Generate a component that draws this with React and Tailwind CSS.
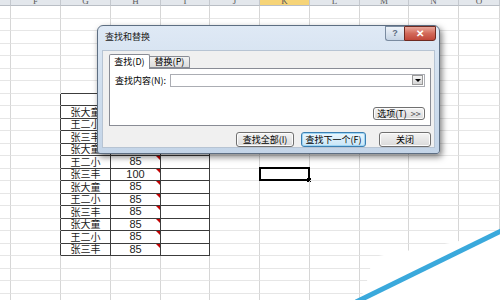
import React from "react";

const COLS = ["", "F", "G", "H", "I", "J", "K", "L", "M", "N", "O"];
const NAMES = ["张大童", "王二小", "张三丰", "张大童", "王二小", "张三丰", "张大童", "王二小", "张三丰", "张大童", "王二小", "张三丰"];
const SCORES = ["85", "85", "85", "85", "85", "100", "85", "85", "85", "85", "85", "85"];
const ROWS = 24;

function Cell({ r, c }) {
  const inTable = r >= 7 && r <= 19 && c >= 2 && c <= 4;
  const rightDark = inTable || (c === 1 && r >= 7 && r <= 19);
  const bottomDark = inTable || (r === 6 && c >= 2 && c <= 4);
  const rb = rightDark ? "border-r-[#3c3c3c]" : "border-r-[#d6d6d6]";
  const bb = bottomDark ? "border-b-[#3c3c3c]" : "border-b-[#e6e6e6]";
  let content = null;
  if (c === 2 && r >= 8 && r <= 19) {
    content = (
      <span className="text-[10px] leading-none text-[#1a1a1a] [font-family:'Noto_Sans_CJK_SC',sans-serif]">
        {NAMES[r - 8]}
      </span>
    );
  }
  if (c === 3 && r >= 8 && r <= 19) {
    content = (
      <>
        <span className="text-[11px] leading-none text-[#222] [font-family:'Liberation_Sans',Arial,sans-serif]">
          {SCORES[r - 8]}
        </span>
        <span className="absolute top-0 right-0 w-0 h-0 border-l-[4px] border-l-transparent border-t-[4px] border-t-[#c00000]" />
      </>
    );
  }
  const selected = r === 13 && c === 6;
  return (
    <div className={`relative flex items-center justify-center border-r border-b ${rb} ${bb}`}>
      {content}
      {selected && (
        <div className="absolute -left-[1px] -top-[2px] -right-[1px] -bottom-[1px] border-2 border-black">
          <div className="absolute -right-[3px] -bottom-[3px] w-[4px] h-[4px] bg-black" />
        </div>
      )}
    </div>
  );
}

function Sheet() {
  const cells = [];
  for (let r = 0; r < ROWS; r++) {
    for (let c = 0; c < COLS.length; c++) {
      cells.push(<Cell key={`${r}-${c}`} r={r} c={c} />);
    }
  }
  return (
    <div className="flex flex-col">
      <div className="grid grid-cols-[11px_50px_50px_50px_49px_50px_50px_50px_49px_50px_41px] h-[6px]">
        {COLS.map((l, i) => (
          <div
            key={i}
            className={`flex items-end justify-center overflow-hidden border-r border-b border-r-[#c4c8ce] border-b-[#b9bec5] ${
              l === "K" ? "bg-[#f6d478]" : "bg-[#e3e7ec]"
            }`}
          >
            <span className="text-[9px] leading-[8px] text-[#5a5a5a] [font-family:'Liberation_Serif',serif]">{l}</span>
          </div>
        ))}
      </div>
      <div className="grid grid-cols-[11px_50px_50px_50px_49px_50px_50px_50px_49px_50px_41px] auto-rows-[12.5px]">
        {cells}
      </div>
    </div>
  );
}

function Btn({ children, className = "", focused = false }) {
  return (
    <div
      className={`flex items-center justify-center rounded-[3px] border text-[9px] leading-none text-black ${
        focused
          ? "border-[#3c7fb1] bg-gradient-to-b from-[#eaf6fd] to-[#c9e6f7] shadow-[inset_0_0_0_1px_#9fd6f5]"
          : "border-[#707070] bg-gradient-to-b from-[#f4f4f4] to-[#dadada] shadow-[inset_0_0_0_1px_#fcfcfc]"
      } ${className}`}
    >
      {children}
    </div>
  );
}

function Dialog() {
  return (
    <div className="absolute left-[97px] top-[25px] w-[343px] h-[129px] flex flex-col rounded-t-[6px] rounded-b-[3px] border border-[#5d6e82] bg-gradient-to-b from-[#dfe9f5] via-[#cfdeee] to-[#c4d5e8] shadow-[2px_3px_6px_rgba(0,0,0,0.5)] [font-family:'Noto_Sans_CJK_SC',sans-serif]">
      <div className="h-[24px] flex items-start">
        <span className="pl-[7px] pt-[6px] text-[9px] leading-none text-[#1a1a1a]">查找和替换</span>
        <div className="ml-auto mr-[3px] flex">
          <div className="w-[19px] h-[15px] flex items-center justify-center border border-[#7a8ba0] border-r-0 rounded-bl-[3px] bg-gradient-to-b from-[#eef3f9] to-[#c6d4e4] text-[9px] leading-none text-[#5b6b80] font-bold [font-family:'Liberation_Sans',sans-serif]">
            ?
          </div>
          <div className="w-[32px] h-[15px] flex items-center justify-center border border-[#6e2b22] rounded-br-[3px] bg-gradient-to-b from-[#e9a89c] via-[#d2695a] to-[#c0473a] text-[10px] leading-none text-white font-bold [font-family:'Liberation_Sans',sans-serif]">
            ✕
          </div>
        </div>
      </div>
      <div className="mx-[4px] h-[98px] bg-[#f0f0f0] border border-[#b7c4d3] flex flex-col pt-[2px] pl-[6px]">
        <div className="flex items-end h-[15px]">
          <div className="relative z-10 -mb-px w-[41px] h-[15px] flex items-center justify-center border border-b-0 border-[#898c95] bg-white rounded-t-[2px] text-[9px] leading-none">
            查找(D)
          </div>
          <div className="w-[40px] h-[12px] flex items-center justify-center border border-l-0 border-[#898c95] bg-gradient-to-b from-[#f2f2f2] to-[#dcdcdc] rounded-tr-[2px] text-[9px] leading-none">
            替换(P)
          </div>
        </div>
        <div className="w-[322px] h-[59px] border border-[#898c95] bg-white flex flex-col px-[5px] pt-[5px] pb-[5px]">
          <div className="flex items-center">
            <span className="w-[56px] text-[9px] leading-none">查找内容(N):</span>
            <div className="w-[257px] h-[13px] border border-[#abadb3] bg-white flex items-center justify-end pr-[1px]">
              <div className="w-[11px] h-[10px] border border-[#9a9a9a] bg-gradient-to-b from-[#f6f6f6] to-[#d6d6d6] flex items-center justify-center">
                <div className="w-0 h-0 border-l-[3px] border-r-[3px] border-t-[3px] border-l-transparent border-r-transparent border-t-black" />
              </div>
            </div>
          </div>
          <div className="mt-auto self-end">
            <Btn className="w-[52px] h-[13px] gap-[4px]">
              <span>选项(T)</span>
              <span className="text-[#444]">&gt;&gt;</span>
            </Btn>
          </div>
        </div>
        <div className="mt-[6px] flex justify-end pr-[3px]">
          <Btn className="w-[58px] h-[15px]">查找全部(I)</Btn>
          <Btn focused className="ml-[7px] w-[65px] h-[15px]">查找下一个(F)</Btn>
          <Btn className="ml-[13px] w-[52px] h-[15px]">关闭</Btn>
        </div>
      </div>
    </div>
  );
}

function Watermark() {
  return (
    <svg className="absolute left-0 top-0 pointer-events-none" width="500" height="300" viewBox="0 0 500 300">
      <polygon points="373,257 450,243 500,232 500,300 360,300 366,285" fill="#ffffff" />
      <line x1="356" y1="302" x2="503" y2="230" stroke="#3aa9dc" strokeWidth="5" />
      <text
        x="412"
        y="284"
        fill="#ffffff"
        fontSize="7"
        opacity="0.85"
        fontFamily="Liberation Sans, sans-serif"
        transform="rotate(-26 412 284)"
      >
        D i
      </text>
    </svg>
  );
}

export default function App() {
  return (
    <div className="relative w-[500px] h-[300px] overflow-hidden bg-white">
      <Sheet />
      <Dialog />
      <Watermark />
    </div>
  );
}
